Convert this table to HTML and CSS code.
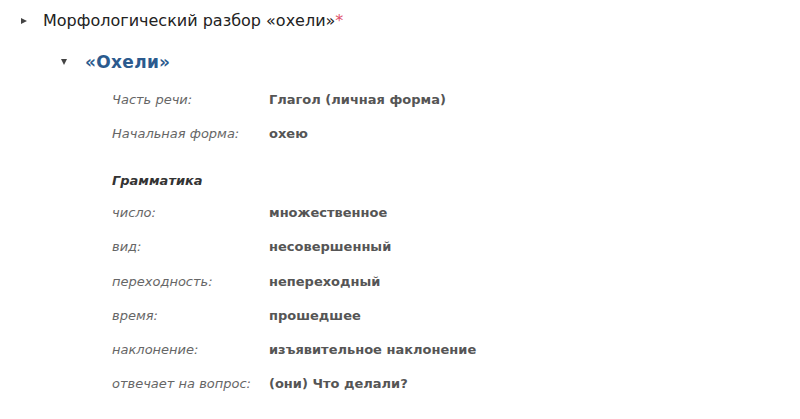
FILE: index.html
```html
<!DOCTYPE html>
<html lang="ru">
<head>
<meta charset="utf-8">
<link rel="stylesheet" href="styles.css">
</head>
<body>
<div class="page">
  <div class="title-row">
    <span class="arrow arrow-right"></span>
    <span class="title">Морфологический разбор «охели»<span class="star">*</span></span>
  </div>
  <div class="word-block">
    <div class="word-row">
      <span class="arrow arrow-down"></span>
      <span class="word">«Охели»</span>
    </div>
    <div class="props">
      <div class="row first"><span class="label">Часть речи:</span><span class="value">Глагол (личная форма)</span></div>
      <div class="row"><span class="label">Начальная форма:</span><span class="value">охею</span></div>
      <div class="section">Грамматика</div>
      <div class="row"><span class="label">число:</span><span class="value">множественное</span></div>
      <div class="row"><span class="label">вид:</span><span class="value">несовершенный</span></div>
      <div class="row"><span class="label">переходность:</span><span class="value">непереходный</span></div>
      <div class="row"><span class="label">время:</span><span class="value">прошедшее</span></div>
      <div class="row"><span class="label">наклонение:</span><span class="value">изъявительное наклонение</span></div>
      <div class="row"><span class="label">отвечает на вопрос:</span><span class="value">(они) Что делали?</span></div>
    </div>
  </div>
</div>
</body>
</html>
```
FILE: styles.css
```css
html, body {
  margin: 0;
  padding: 0;
  background: #fff;
}
body {
  font-family: "DejaVu Sans", Verdana, sans-serif;
  color: #222;
}
.page {
  padding: 8px 0 0 21px;
}
.title-row {
  display: flex;
  align-items: center;
  height: 25px;
}
.arrow {
  display: inline-block;
  width: 0;
  height: 0;
}
.arrow-right {
  border-top: 3.5px solid transparent;
  border-bottom: 3.5px solid transparent;
  border-left: 6px solid #444;
  margin-right: 16px;
}
.arrow-down {
  border-left: 3.5px solid transparent;
  border-right: 3.5px solid transparent;
  border-top: 6px solid #444;
  margin-right: 18px;
}
.title {
  font-size: 16px;
  color: #222;
}
.star {
  color: #e0506a;
}
.word-block {
  padding-left: 40px;
  margin-top: 17px;
}
.word-row {
  display: flex;
  align-items: center;
  height: 24px;
}
.word {
  font-size: 17px;
  font-weight: bold;
  color: #2b5a8e;
  letter-spacing: 0.3px;
}
.props {
  padding-left: 51px;
  padding-top: 5px;
  font-size: 13px;
}
.row {
  display: flex;
  height: 34.3px;
  align-items: center;
}
.row.first {
  height: 33px;
  margin-top: 4px;
}
.label {
  width: 157px;
  font-style: italic;
  color: #666;
}
.value {
  font-weight: bold;
  color: #555;
}
.section {
  margin-top: 15px;
  height: 30px;
  display: flex;
  align-items: center;
  font-weight: bold;
  font-style: italic;
  color: #333;
}
```
